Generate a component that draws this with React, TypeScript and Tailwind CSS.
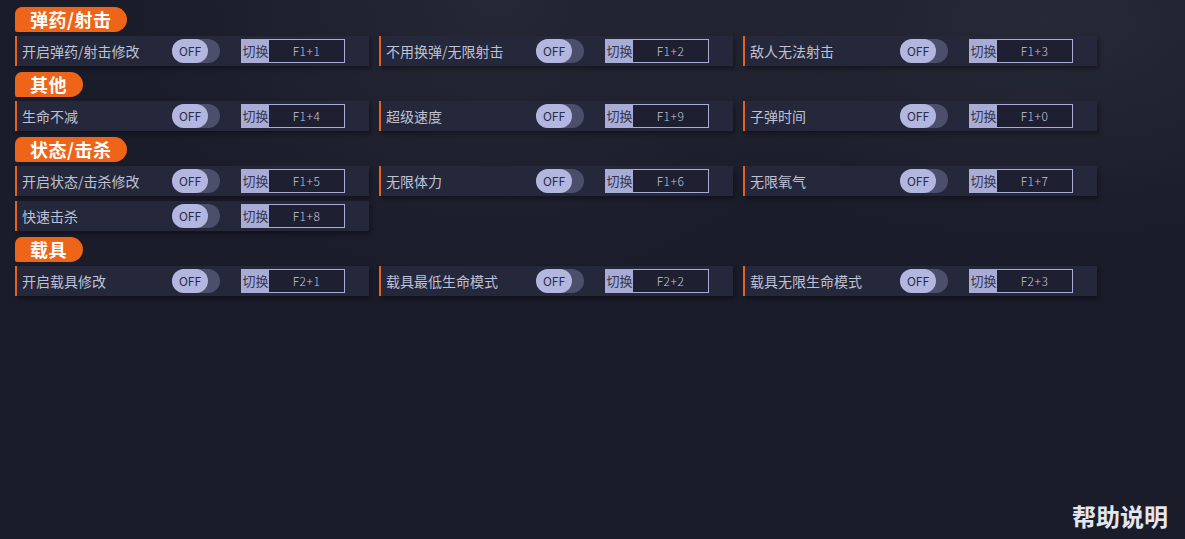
const sections = [
  {
    title: "弹药/射击",
    items: [
      { label: "开启弹药/射击修改", key: "F1+1" },
      { label: "不用换弹/无限射击", key: "F1+2" },
      { label: "敌人无法射击", key: "F1+3" },
    ],
  },
  {
    title: "其他",
    items: [
      { label: "生命不减", key: "F1+4" },
      { label: "超级速度", key: "F1+9" },
      { label: "子弹时间", key: "F1+0" },
    ],
  },
  {
    title: "状态/击杀",
    items: [
      { label: "开启状态/击杀修改", key: "F1+5" },
      { label: "无限体力", key: "F1+6" },
      { label: "无限氧气", key: "F1+7" },
      { label: "快速击杀", key: "F1+8" },
    ],
  },
  {
    title: "载具",
    items: [
      { label: "开启载具修改", key: "F2+1" },
      { label: "载具最低生命模式", key: "F2+2" },
      { label: "载具无限生命模式", key: "F2+3" },
    ],
  },
];

function Toggle() {
  return (
    <div className="flex h-[24px] w-[48px] items-center rounded-full bg-[#4c4f6c]">
      <div className="flex h-[24px] w-[36px] items-center justify-center rounded-full bg-[#b3b7e0] text-[12px] text-[#2a2c46]">
        OFF
      </div>
    </div>
  );
}

function HotKey({ value }: { value: string }) {
  return (
    <div className="flex h-[24px] w-[104px] border border-[#a9add6]">
      <div className="flex w-[27px] items-center justify-center bg-[#a9add6] text-[13px] text-[#34364f]">切换</div>
      <div className="flex flex-1 items-center justify-center bg-[#1e1f30] text-[12px] font-light tracking-[0.5px] text-[#c4c7de]">
        {value}
      </div>
    </div>
  );
}

function Row({ label, hotkey }: { label: string; hotkey: string }) {
  return (
    <div className="flex h-[30px] items-center border-l-2 border-[#e8621d] bg-[#25273a] pl-[5px] shadow-[2px_3px_4px_rgba(0,0,0,0.35)]">
      <div className="w-[150px] text-[14px] text-[#bfc2d6]">{label}</div>
      <Toggle />
      <div className="ml-[21px]">
        <HotKey value={hotkey} />
      </div>
    </div>
  );
}

export default function App() {
  return (
    <div
      className="flex h-[539px] w-full flex-col bg-[#1b1c2a] bg-[radial-gradient(ellipse_at_42%_0%,rgba(80,88,100,0.18),transparent_38%),radial-gradient(ellipse_at_88%_4%,rgba(80,92,100,0.2),transparent_30%)] px-[15px] pt-[7px]"
      style={{ fontFamily: '"Noto Sans CJK SC", "Noto Sans", sans-serif' }}
    >
      {sections.map((s) => (
        <div key={s.title} className="mb-[6px] flex flex-col items-start">
          <div className="flex h-[25px] items-center rounded-tl-[7px] rounded-bl-[2px] rounded-r-[13px] bg-[#ee6419] pl-[15px] pr-[16px] text-[18px] font-bold tracking-[0.5px] text-white">
            {s.title}
          </div>
          <div className="mt-[4px] grid grid-cols-[354px_354px_354px] gap-x-[10px] gap-y-[5px]">
            {s.items.map((it) => (
              <Row key={it.label} label={it.label} hotkey={it.key} />
            ))}
          </div>
        </div>
      ))}
      <div className="mt-auto mb-[5px] self-end pr-[2px] text-[24px] font-bold text-[#e3e5ef]">帮助说明</div>
    </div>
  );
}
